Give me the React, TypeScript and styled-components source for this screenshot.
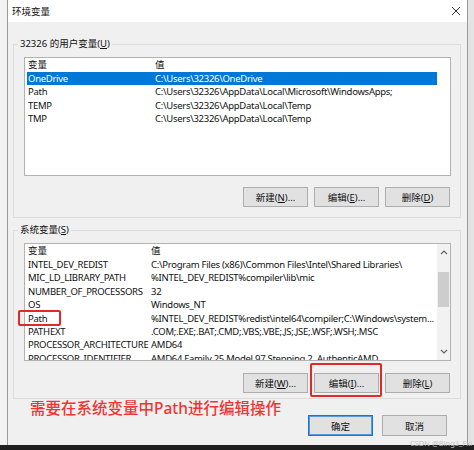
import React from "react";
import styled, { createGlobalStyle } from "styled-components";

interface EnvVar {
  name: string;
  value: string;
}

const userVars: EnvVar[] = [
  { name: "OneDrive", value: "C:\\Users\\32326\\OneDrive" },
  { name: "Path", value: "C:\\Users\\32326\\AppData\\Local\\Microsoft\\WindowsApps;" },
  { name: "TEMP", value: "C:\\Users\\32326\\AppData\\Local\\Temp" },
  { name: "TMP", value: "C:\\Users\\32326\\AppData\\Local\\Temp" },
];

const systemVars: EnvVar[] = [
  { name: "INTEL_DEV_REDIST", value: "C:\\Program Files (x86)\\Common Files\\Intel\\Shared Libraries\\" },
  { name: "MIC_LD_LIBRARY_PATH", value: "%INTEL_DEV_REDIST%compiler\\lib\\mic" },
  { name: "NUMBER_OF_PROCESSORS", value: "32" },
  { name: "OS", value: "Windows_NT" },
  { name: "Path", value: "%INTEL_DEV_REDIST%redist\\intel64\\compiler;C:\\Windows\\system..." },
  { name: "PATHEXT", value: ".COM;.EXE;.BAT;.CMD;.VBS;.VBE;.JS;.JSE;.WSF;.WSH;.MSC" },
  { name: "PROCESSOR_ARCHITECTURE", value: "AMD64" },
  { name: "PROCESSOR_IDENTIFIER", value: "AMD64 Family 25 Model 97 Stepping 2, AuthenticAMD" },
];

const GlobalStyle = createGlobalStyle`
  html, body {
    margin: 0;
    padding: 0;
  }
  body {
    font-family: "Noto Sans", "Noto Sans CJK SC", sans-serif;
    background: #1f1f1f;
  }
  * {
    box-sizing: border-box;
  }
`;

const CloseIcon = () => (
  <svg width="10" height="10" viewBox="0 0 10 10">
    <path d="M1 1 L9 9 M9 1 L1 9" stroke="#333" strokeWidth="1" fill="none" />
  </svg>
);

const Chevron = ({ down }: { down?: boolean }) => (
  <svg width="8" height="5" viewBox="0 0 8 5">
    <path
      d={down ? "M1 1 L4 4 L7 1" : "M1 4 L4 1 L7 4"}
      stroke="#606060"
      strokeWidth="1.1"
      fill="none"
    />
  </svg>
);

const VarList = ({
  vars,
  nameWidth,
  height,
  selected,
  scroll,
}: {
  vars: EnvVar[];
  nameWidth: number;
  height: number;
  selected?: number;
  scroll?: boolean;
}) => (
  <ListBox $height={height}>
    <ListBody>
      <HeaderRow>
        <NameCell $width={nameWidth}>变量</NameCell>
        <ValueCell>值</ValueCell>
      </HeaderRow>
      {vars.map((v, i) => (
        <Row key={v.name} $selected={i === selected}>
          <NameCell $width={nameWidth}>{v.name}</NameCell>
          <ValueCell>{v.value}</ValueCell>
        </Row>
      ))}
    </ListBody>
    {scroll && (
      <ScrollBar>
        <ScrollArrow>
          <Chevron />
        </ScrollArrow>
        <ScrollTrack>
          <Thumb />
        </ScrollTrack>
        <ScrollArrow>
          <Chevron down />
        </ScrollArrow>
      </ScrollBar>
    )}
  </ListBox>
);

const App = () => {
  return (
    <Page>
      <GlobalStyle />
      <Desktop>
        <Dialog>
          <TitleBar>
            <Title>环境变量</Title>
            <CloseIcon />
          </TitleBar>
          <Body>
            <Group $bottom={10}>
              <GroupLabel>
                32326 的用户变量(<u>U</u>)
              </GroupLabel>
              <VarList vars={userVars} nameWidth={128} height={119} selected={0} />
              <ButtonRow $gap={11}>
                <Button>
                  新建(<u>N</u>)...
                </Button>
                <Button>
                  编辑(<u>E</u>)...
                </Button>
                <Button>
                  删除(<u>D</u>)
                </Button>
              </ButtonRow>
            </Group>
            <Group $bottom={5} $top={12}>
              <GroupLabel>
                系统变量(<u>S</u>)
              </GroupLabel>
              <VarList vars={systemVars} nameWidth={124} height={118} scroll />
              <ButtonRow $gap={12}>
                <Button>
                  新建(<u>W</u>)...
                </Button>
                <Button>
                  编辑(<u>I</u>)...
                </Button>
                <Button>
                  删除(<u>L</u>)
                </Button>
              </ButtonRow>
            </Group>
            <Footer>
              <Button $primary>确定</Button>
              <Button>取消</Button>
            </Footer>
          </Body>

          <Note>需要在系统变量中Path进行编辑操作</Note>
          <RedMark $left={10} $top={310} $width={43} $height={16} />
          <RedMark $left={302} $top={363} $width={72} $height={34} />
        </Dialog>
      </Desktop>
      <Watermark>CSDN @Bing3_Fxi</Watermark>
    </Page>
  );
};

export default App;

const Page = styled.div`
  position: relative;
  width: 474px;
  height: 450px;
  background: #1f1f1f;
  overflow: hidden;
`;

const Desktop = styled.div`
  display: flex;
  height: 445px;
  padding: 0 6px 0 7px;
  background: linear-gradient(to right, #f2f2f2 0 7px, #e4e4e4 7px);
`;

const Dialog = styled.div`
  position: relative;
  flex: 1;
  display: flex;
  flex-direction: column;
  background: #f0f0f0;
  border-left: 1px solid #9a9a9a;
  border-right: 1px solid #9a9a9a;
`;

const TitleBar = styled.div`
  display: flex;
  align-items: center;
  justify-content: space-between;
  height: 22px;
  padding: 0 6px 0 4px;
  background: #ffffff;
`;

const Title = styled.span`
  font-size: 9.5px;
  color: #111;
`;

const Body = styled.div`
  display: flex;
  flex-direction: column;
  padding: 22px 6px 9px 5px;
`;

const Group = styled.div<{ $bottom: number; $top?: number }>`
  display: flex;
  flex-direction: column;
  margin-top: ${(p) => p.$top ?? 0}px;
  padding: 0 9px ${(p) => p.$bottom}px 10px;
  border: 1px solid #dcdcdc;
`;

const GroupLabel = styled.div`
  align-self: flex-start;
  margin: -8px 0 6px -6px;
  padding: 0 2px;
  font-size: 9.5px;
  line-height: 14px;
  color: #111;
  background: #f0f0f0;
`;

const ListBox = styled.div<{ $height: number }>`
  display: flex;
  height: ${(p) => p.$height}px;
  background: #ffffff;
  border: 1px solid #b2b2b2;
  overflow: hidden;
`;

const ListBody = styled.div`
  flex: 1;
  min-width: 0;
  overflow: hidden;
`;

const Row = styled.div<{ $selected?: boolean }>`
  display: flex;
  width: 410px;
  height: 13.4px;
  margin-left: 2px;
  font-size: 9.5px;
  line-height: 13.4px;
  letter-spacing: -0.28px;
  white-space: nowrap;
  color: ${(p) => (p.$selected ? "#ffffff" : "#111")};
  background: ${(p) => (p.$selected ? "#0078d7" : "transparent")};
`;

const HeaderRow = styled(Row)`
  height: 14px;
  line-height: 14px;
  letter-spacing: 0;
`;

const NameCell = styled.span<{ $width: number }>`
  flex: none;
  width: ${(p) => p.$width}px;
  padding-left: 1px;
  overflow: hidden;
`;

const ValueCell = styled.span`
  flex: 1;
  overflow: hidden;
`;

const ScrollBar = styled.div`
  display: flex;
  flex-direction: column;
  width: 13px;
  background: #f2f2f2;
`;

const ScrollArrow = styled.div`
  display: flex;
  align-items: center;
  justify-content: center;
  height: 17px;
`;

const ScrollTrack = styled.div`
  flex: 1;
  padding: 11px 1px 0;
`;

const Thumb = styled.div`
  height: 35px;
  background: #cdcdcd;
`;

const ButtonRow = styled.div<{ $gap: number }>`
  display: flex;
  justify-content: flex-end;
  gap: 6px;
  margin-top: ${(p) => p.$gap}px;
  padding-right: 1px;
`;

const Button = styled.div<{ $primary?: boolean }>`
  display: flex;
  align-items: center;
  justify-content: center;
  width: 65px;
  height: 20px;
  font-size: 9.5px;
  color: #111;
  background: #e1e1e1;
  border: 1px solid ${(p) => (p.$primary ? "#1c74c9" : "#adadad")};
  box-shadow: ${(p) => (p.$primary ? "inset 0 0 0 1px #5a9be0" : "none")};

  u {
    text-decoration-thickness: 1px;
    text-underline-offset: 1px;
  }
`;

const Footer = styled.div`
  display: flex;
  justify-content: flex-end;
  gap: 9px;
  margin-top: 16px;
  padding-right: 14px;

  ${Button} {
    height: 21px;
  }
`;

const Note = styled.div`
  position: absolute;
  left: 22px;
  top: 399px;
  font-size: 15.5px;
  line-height: 18px;
  font-weight: 500;
  color: #ee3535;
  white-space: nowrap;
`;

const RedMark = styled.div<{
  $left: number;
  $top: number;
  $width: number;
  $height: number;
}>`
  position: absolute;
  left: ${(p) => p.$left}px;
  top: ${(p) => p.$top}px;
  width: ${(p) => p.$width}px;
  height: ${(p) => p.$height}px;
  border: 2px solid #e02a2a;
  border-radius: 2px;
`;

const Watermark = styled.div`
  position: absolute;
  left: 410px;
  top: 438px;
  font-size: 7.5px;
  line-height: 10px;
  color: #c4c4c4;
  white-space: nowrap;
`;
